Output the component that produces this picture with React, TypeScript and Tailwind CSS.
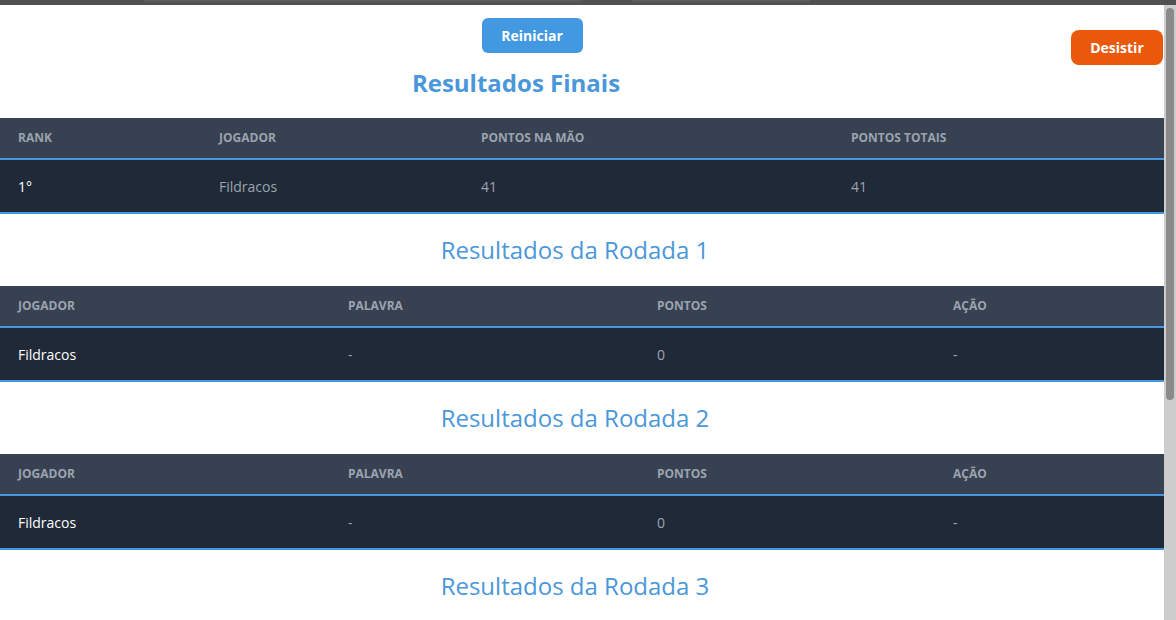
const font = { fontFamily: '"Open Sans", "Liberation Sans", sans-serif' };

interface Col {
  label: string;
}

function ResultTable({
  cols,
  gridClass,
  rows,
}: {
  cols: Col[];
  gridClass: string;
  rows: string[][];
}) {
  return (
    <div className="w-full">
      <div className={`grid ${gridClass} h-[42px] items-center bg-[#374151] border-b-2 border-[#4299e1]`}>
        {cols.map((c) => (
          <div key={c.label} className="px-[18px] text-[12px] font-bold uppercase text-[#9ca3af]">
            {c.label}
          </div>
        ))}
      </div>
      {rows.map((r, i) => (
        <div
          key={i}
          className={`grid ${gridClass} h-[54px] items-center bg-[#1f2937] border-b-2 border-[#4299e1]`}>
          {r.map((cell, j) => (
            <div
              key={j}
              className={
                j === 0
                  ? 'px-[18px] text-[14px] font-medium text-white'
                  : 'px-[18px] text-[14px] text-[#9ca3af]'
              }>
              {cell}
            </div>
          ))}
        </div>
      ))}
    </div>
  );
}

const roundCols: Col[] = [
  { label: 'Jogador' },
  { label: 'Palavra' },
  { label: 'Pontos' },
  { label: 'Ação' },
];

export default function App() {
  return (
    <div className="h-[620px] w-[1176px] overflow-hidden bg-white flex flex-col" style={font}>
      {/* top strip */}
      <div className="h-[5px] w-full shrink-0 bg-[#515151] flex">
        <div className="w-[144px]" />
        <div className="w-[437px] h-[2px] bg-[#5c5c5c]" />
        <div className="w-[51px]" />
        <div className="w-[178px] h-[2px] bg-[#5c5c5c]" />
      </div>
      <div className="flex flex-1 min-h-0">
        <div className="relative w-[1164px] flex flex-col">
          <button className="absolute right-[1px] top-[25px] h-[35px] w-[92px] rounded-lg bg-[#ea580c] text-[14px] font-bold text-white">
            Desistir
          </button>

          <div className="flex justify-center pt-[13px] pr-[100px]">
            <button className="h-[35px] w-[101px] rounded-md bg-[#4299e1] text-[14px] font-bold text-white">
              Reiniciar
            </button>
          </div>
          <h1 className="mt-[14px] mb-[19px] pr-[132px] text-center text-[24px] leading-[32px] font-bold text-[#4a97d9]">
            Resultados Finais
          </h1>

          <ResultTable
            cols={[
              { label: 'Rank' },
              { label: 'Jogador' },
              { label: 'Pontos na Mão' },
              { label: 'Pontos Totais' },
            ]}
            gridClass="grid-cols-[201px_262px_370px_1fr]"
            rows={[['1°', 'Fildracos', '41', '41']]}
          />

          {[1, 2, 3].map((n) => (
            <div key={n}>
              <h2 className="my-[20px] pr-[14px] text-center text-[24px] leading-[32px] text-[#4a97d9]">
                Resultados da Rodada {n}
              </h2>
              <ResultTable
                cols={roundCols}
                gridClass="grid-cols-[330px_309px_296px_1fr]"
                rows={[['Fildracos', '-', '0', '-']]}
              />
            </div>
          ))}
        </div>

        {/* scrollbar */}
        <div className="w-[12px] bg-[#cdcdcd] pt-[3px] pl-[2px]">
          <div className="h-[392px] w-[8px] rounded-full bg-[#8a8a8a]" />
        </div>
      </div>
    </div>
  );
}
